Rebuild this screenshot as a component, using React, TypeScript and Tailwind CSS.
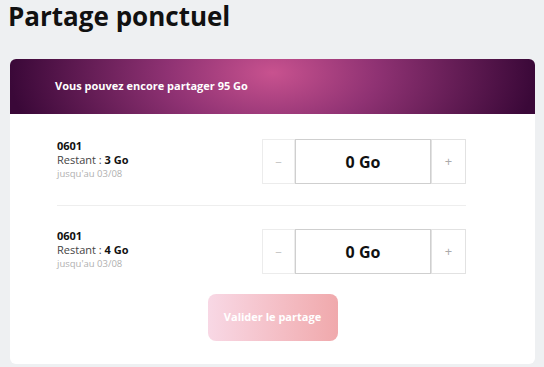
import React, { useState } from 'react';

const FONT = { fontFamily: '"Open Sans", "Liberation Sans", sans-serif' };

interface LineProps {
  number: string;
  remaining: number;
  until: string;
}

const Stepper: React.FC = () => {
  const [value, setValue] = useState(0);
  return (
    <div className="flex h-[45px] w-[204px]">
      <button
        onClick={() => setValue(Math.max(0, value - 1))}
        className="w-[33px] flex items-center justify-center border border-[#ececec] text-[#c8c8c8] text-[13px]"
      >
        –
      </button>
      <div className="flex-1 flex items-center justify-center border border-[#cfcfcf] text-[16px] font-bold text-[#111]">
        {value} Go
      </div>
      <button
        onClick={() => setValue(value + 1)}
        className="w-[35px] flex items-center justify-center border border-[#e2e2e2] text-[#aaa] text-[13px]"
      >
        +
      </button>
    </div>
  );
};

const Line: React.FC<LineProps> = ({ number, remaining, until }) => (
  <div className="flex items-center justify-between h-[45px]">
    <div className="flex flex-col leading-[14px] -mt-[3px]">
      <span className="text-[11px] font-bold text-[#111]">{number}</span>
      <span className="text-[11px] text-[#444]">
        Restant : <b className="text-[#111]">{remaining} Go</b>
      </span>
      <span className="text-[9.5px] text-[#b0b0b0]">{until}</span>
    </div>
    <Stepper />
  </div>
);

export default function App() {
  return (
    <div className="w-[544px] h-[367px] bg-[#eef0f2] overflow-hidden" style={FONT}>
      <h1 className="pl-[8px] pt-[1px] text-[26px] leading-[30px] font-bold text-[#111]">
        Partage ponctuel
      </h1>
      <div className="mt-[28px] ml-[10px] w-[525px] h-[305px] bg-white rounded-[6px] overflow-hidden flex flex-col">
        <div className="h-[55px] flex items-center pl-[45px] bg-[radial-gradient(ellipse_50%_260%_at_50%_25%,#c8528f_0%,#8f3273_40%,#3a0838_100%)]">
          <span className="text-[11px] font-bold text-white">Vous pouvez encore partager 95 Go</span>
        </div>
        <div className="pl-[47px] pr-[69px] pt-[25px]">
          <Line number="0601" remaining={3} until="jusqu'au 03/08" />
          <div className="h-[1px] bg-[#eeeeee] mt-[21px] mb-[23px]" />
          <Line number="0601" remaining={4} until="jusqu'au 03/08" />
        </div>
        <div className="flex justify-center pt-[20px]">
          <button className="w-[130px] h-[47px] rounded-[8px] bg-gradient-to-r from-[#f8d8e5] to-[#f0a9ac] text-white text-[11px] font-bold">
            Valider le partage
          </button>
        </div>
      </div>
    </div>
  );
}
